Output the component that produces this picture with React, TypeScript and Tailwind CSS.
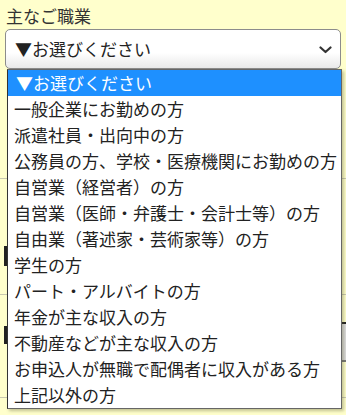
import React from "react";

const items = [
  "一般企業にお勤めの方",
  "派遣社員・出向中の方",
  "公務員の方、学校・医療機関にお勤めの方",
  "自営業（経営者）の方",
  "自営業（医師・弁護士・会計士等）の方",
  "自由業（著述家・芸術家等）の方",
  "学生の方",
  "パート・アルバイトの方",
  "年金が主な収入の方",
  "不動産などが主な収入の方",
  "お申込人が無職で配偶者に収入がある方",
  "上記以外の方",
];

export default function App() {
  return (
    <div
      className="relative w-[346px] h-[415px] overflow-hidden bg-[#ffffcc] text-[#333]"
      style={{ fontFamily: '"Noto Sans CJK JP", "Noto Sans", sans-serif' }}
    >
      <div className="px-[5px] pt-[4px]">
        <div className="pl-[1px] text-[17px] leading-[24px] text-[#333]">主なご職業</div>
        <div className="mt-[1px] h-[40px] rounded-[5px] border border-[#8c8c8c] bg-gradient-to-b from-white from-60% to-[#e9e9e9] flex items-center justify-between pl-[9px] pr-[8px]">
          <span className="text-[17px] leading-[24px] text-[#222]">▼お選びください</span>
          <svg width="13" height="8" viewBox="0 0 13 8" className="mt-[2px]">
            <path d="M1.5 1.5 L6.5 6 L11.5 1.5" fill="none" stroke="#333" strokeWidth="2.2" strokeLinecap="round" strokeLinejoin="round" />
          </svg>
        </div>
      </div>

      {/* background form rows hidden behind the open list */}
      <div className="flex flex-col">
        <div className="h-[110px] border-b border-[#c9c9b0]" />
        <div className="h-[116px] border-b border-[#c9c9b0] flex flex-col pt-[67px] pl-[4px]">
          <div className="h-[20px] w-[3px] bg-[#222]" />
        </div>
        <div className="h-[103px] border-b border-[#c9c9b0] flex justify-between pl-[4px]">
          <div className="mt-[31px] h-[18px] w-[3px] bg-[#222]" />
          <div className="mt-[27px] h-[40px] w-[8px] bg-[#dcdcdc] border-t-2 border-t-[#222] border-b-2 border-b-[#777]" />
        </div>
      </div>

      {/* open dropdown list */}
      <div className="absolute left-[7px] top-[69px] w-[335px] bg-white border border-[#666] border-l-[#333] shadow-[2px_2px_3px_rgba(80,80,40,0.35)]">
        <div className="h-[26px] bg-[#1e90ff] text-white text-[17px] leading-[26px] pl-[8px]">▼お選びください</div>
        {items.map((t) => (
          <div key={t} className="h-[26px] text-[17px] leading-[26px] pl-[6px] text-[#222] whitespace-nowrap">
            {t}
          </div>
        ))}
      </div>
    </div>
  );
}
